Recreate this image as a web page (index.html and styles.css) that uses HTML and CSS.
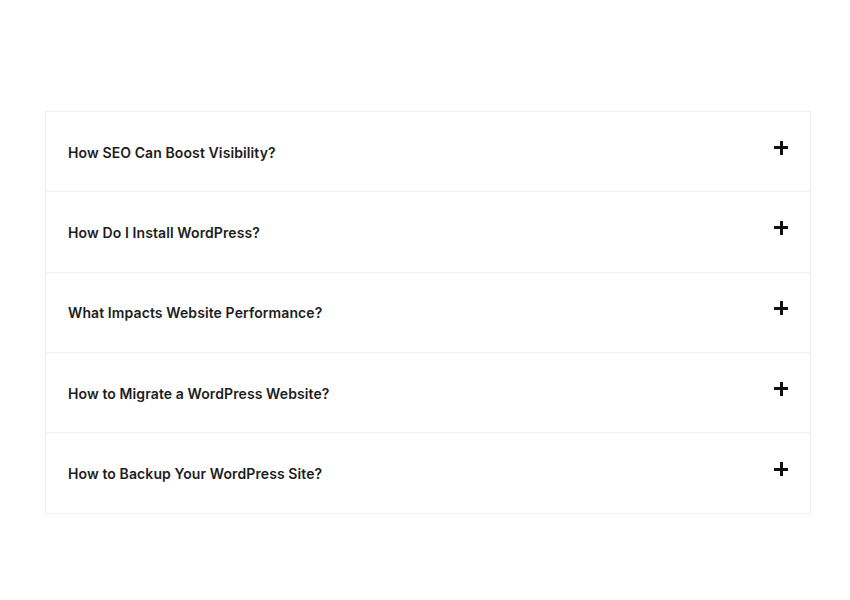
FILE: index.html
```html
<!DOCTYPE html>
<html lang="en">
<head>
<meta charset="utf-8">
<title>FAQ</title>
<link rel="stylesheet" href="styles.css">
</head>
<body>
<div class="faq">
  <div class="faq-item"><span class="q">How SEO Can Boost Visibility?</span><span class="plus"></span></div>
  <div class="faq-item"><span class="q">How Do I Install WordPress?</span><span class="plus"></span></div>
  <div class="faq-item"><span class="q">What Impacts Website Performance?</span><span class="plus"></span></div>
  <div class="faq-item"><span class="q">How to Migrate a WordPress Website?</span><span class="plus"></span></div>
  <div class="faq-item"><span class="q">How to Backup Your WordPress Site?</span><span class="plus"></span></div>
</div>
</body>
</html>
```
FILE: styles.css
```css
html, body {
  margin: 0;
  padding: 0;
  background: #ffffff;
}
body {
  font-family: "Inter", "Noto Sans", sans-serif;
}
.faq {
  width: 766px;
  margin: 111px 0 0 45px;
  border: 1px solid #eeeef3;
  box-sizing: border-box;
}
.faq-item {
  height: 80.3px;
  box-sizing: border-box;
  display: flex;
  align-items: center;
  justify-content: space-between;
  padding: 0 22px 0 22px;
  border-bottom: 1px solid #f0f0f5;
}
.faq-item:last-child {
  border-bottom: none;
}
.q {
  font-size: 14px;
  font-weight: 600;
  color: #1d1d22;
  letter-spacing: 0.1px;
  padding-top: 1px;
}
.plus {
  position: relative;
  width: 14px;
  height: 14px;
  margin-top: -8px;
}
.plus::before, .plus::after {
  content: "";
  position: absolute;
  background: #111;
}
.plus::before {
  left: 0;
  top: 5.5px;
  width: 14px;
  height: 3px;
}
.plus::after {
  left: 5.5px;
  top: 0;
  width: 3px;
  height: 14px;
}
```
